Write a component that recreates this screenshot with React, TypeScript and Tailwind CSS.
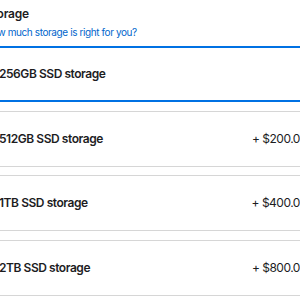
import React from 'react';

interface StorageOption {
    id: string;
    label: string;
    price?: string;
}

const options: StorageOption[] = [
    { id: '256', label: '256GB SSD storage' },
    { id: '512', label: '512GB SSD storage', price: '+ $200.00' },
    { id: '1tb', label: '1TB SSD storage', price: '+ $400.00' },
    { id: '2tb', label: '2TB SSD storage', price: '+ $800.00' },
];

export default function App() {
    const selected = '256';

    return (
        <div className="w-[300px] h-[300px] overflow-hidden bg-white text-[#1d1d1f] font-['Inter',sans-serif]">
            <div className="ml-[-15px] w-[336px] pt-[6px]">
                <h2 className="text-[12px] leading-[16px] font-semibold tracking-[-0.2px]">Storage</h2>
                <a className="block mt-[3px] text-[10px] leading-[14px] tracking-[-0.4px] text-[#0066cc]">
                    How much storage is right for you?
                </a>

                <div className="mt-[7px] flex flex-col gap-[8.67px]">
                    {options.map(option => {
                        const isSelected = option.id === selected;
                        return (
                            <div
                                key={option.id}
                                className={
                                    isSelected
                                        ? 'h-[56px] flex items-center justify-between rounded-[10px] border-2 border-[#0071e3] px-[12px]'
                                        : 'h-[56px] flex items-center justify-between rounded-[10px] border border-[#d6d6d6] px-[13px]'
                                }
                            >
                                <span className="text-[12px] font-semibold tracking-[-0.45px]">{option.label}</span>
                                {option.price && (
                                    <span className="text-[12px] tracking-[-0.5px]">{option.price}</span>
                                )}
                            </div>
                        );
                    })}
                </div>
            </div>
        </div>
    );
}
